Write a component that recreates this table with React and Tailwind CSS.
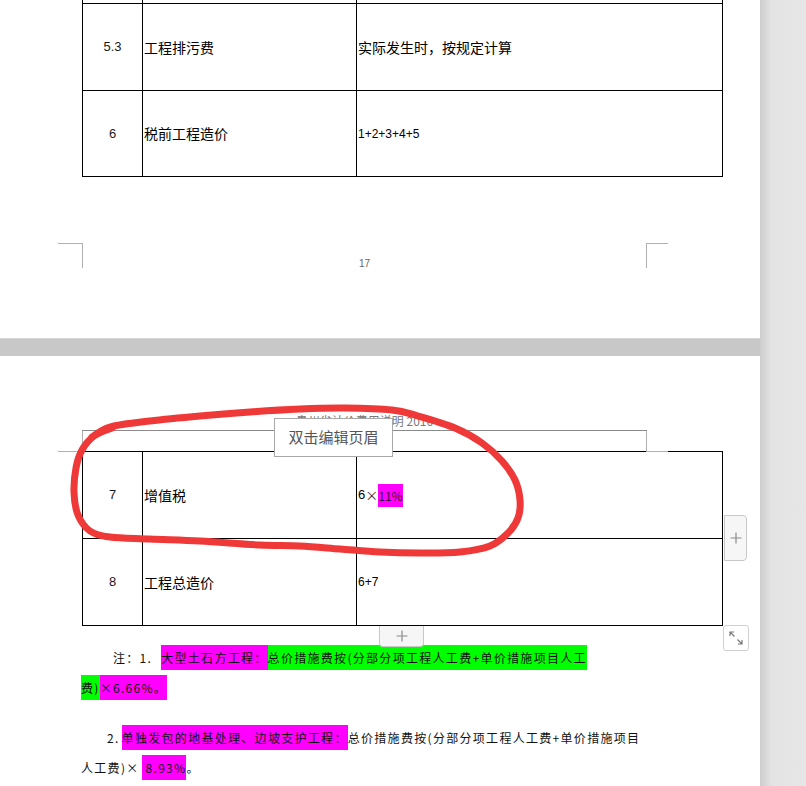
import React from "react";

const pts = [
  [92, 437], [110, 427], [150, 421], [200, 416], [250, 412], [300, 409], [345, 408],
  [392, 410], [418, 416], [455, 428], [482, 443], [502, 461], [515, 480], [520, 500],
  [518, 518], [508, 533], [490, 546], [460, 552], [420, 553], [380, 552], [340, 549],
  [300, 546], [260, 545], [200, 541], [150, 539], [110, 537], [90, 531], [78, 515],
  [74, 492], [76, 468], [82, 450], [94, 436], [112, 428],
];

function smooth(p) {
  let d = `M${p[0][0]},${p[0][1]}`;
  for (let i = 0; i < p.length - 1; i++) {
    const p0 = p[i - 1] || p[i];
    const p1 = p[i];
    const p2 = p[i + 1];
    const p3 = p[i + 2] || p2;
    const c1 = [p1[0] + (p2[0] - p0[0]) / 6, p1[1] + (p2[1] - p0[1]) / 6];
    const c2 = [p2[0] - (p3[0] - p1[0]) / 6, p2[1] - (p3[1] - p1[1]) / 6];
    d += ` C${c1[0].toFixed(1)},${c1[1].toFixed(1)} ${c2[0].toFixed(1)},${c2[1].toFixed(1)} ${p2[0]},${p2[1]}`;
  }
  return d;
}

const cjk = "font-['Noto_Sans_CJK_SC',sans-serif]";
const num = "font-['Liberation_Sans','Noto_Sans_CJK_SC',sans-serif]";

function Row({ h, n, name, formula, top = true }) {
  return (
    <div className={`grid grid-cols-[59px_214px_1fr] ${h} ${top ? "border-t" : ""} border-black`}>
      <div className={`flex items-center justify-center ${num} text-[13px] text-[#1a1a1a]`}>{n}</div>
      <div className={`flex items-center border-l border-black pl-px ${cjk} text-[14px] text-black`}>{name}</div>
      <div className="flex items-center border-l border-black pl-px">{formula}</div>
    </div>
  );
}

export default function App() {
  return (
    <div className="relative flex h-[786px] w-[806px] overflow-hidden bg-[#e6e6e6]">
      <div className="flex w-[760px] flex-col">
        {/* Page 1 */}
        <div className="h-[338px] bg-white">
          <div className="ml-[82px] w-[641px] border-x border-b border-black">
            <div className="grid h-[3px] grid-cols-[59px_214px_1fr]">
              <div />
              <div className="border-l border-black" />
              <div className="border-l border-black" />
            </div>
            <Row
              h="h-[87px]"
              n="5.3"
              name="工程排污费"
              formula={<span className={`${cjk} text-[14px] text-black`}>实际发生时，按规定计算</span>}
            />
            <Row
              h="h-[86px]"
              n="6"
              name="税前工程造价"
              formula={<span className={`${num} text-[12px] text-black`}>1+2+3+4+5</span>}
            />
          </div>
          <div className="mt-[66px] flex pl-[58px]">
            <div className="h-[25px] w-[25px] border-r border-t border-[#b0b0b0]" />
            <div className="flex w-[563px] justify-center pt-[15px]">
              <span className={`${num} text-[10px] leading-[12px] text-[#666]`}>17</span>
            </div>
            <div className="h-[25px] w-[22px] border-l border-t border-[#b0b0b0]" />
          </div>
        </div>

        {/* gap between pages */}
        <div className="h-[18px] border-t border-[#d6d6d6] bg-[#c8c8c8]" />

        {/* Page 2 */}
        <div className="relative flex-1 bg-white">
          <div className="ml-[82px] flex h-[75px] w-[565px] items-end justify-center border-b border-[#8a8a8a] pb-px">
            <span className={`${cjk} text-[12px] leading-[16px] text-[#7a7a7a]`}>贵州省计价费用说明 2016</span>
          </div>
          <div className="flex pl-[58px]">
            <div className="h-[21px] w-[25px] border-b border-r border-[#b0b0b0]" />
            <div className="w-[563px]" />
            <div className="h-[21px] w-[22px] border-b border-l border-[#b0b0b0]" />
          </div>
          <div className="-mt-px ml-[82px] w-[641px] border-x border-b border-black">
            <Row
              h="h-[87px]"
              n="7"
              name="增值税"
              formula={
                <span className={`${cjk} flex items-center text-[13px] text-black`}>
                  <span className={num}>6</span>
                  <span className="text-[#333]">×</span>
                  <span className="bg-[#ff00ff] py-[3px] text-[12px] leading-[17px] text-[#3a003a]">11%</span>
                </span>
              }
            />
            <Row
              h="h-[87px]"
              n="8"
              name="工程总造价"
              formula={<span className={`${num} text-[12px] text-black`}>6+7</span>}
            />
          </div>

          {/* notes */}
          <div className={`ml-[81px] mt-[17px] ${cjk} text-[12px] leading-[30px] tracking-[1.3px] text-[#111]`}>
            <div className="whitespace-nowrap pl-[32px]">
              注：1.<span className="inline-block w-[9px]" />
              <span className="bg-[#ff00ff] py-[4px]">大型土石方工程：</span>
              <span className="bg-[#00ff00] py-[4px]">总价措施费按(分部分项工程人工费+单价措施项目人工</span>
            </div>
            <div className="whitespace-nowrap">
              <span className="bg-[#00ff00] py-[4px]">费)</span>
              <span className="bg-[#ff00ff] py-[4px]">×6.66%。</span>
            </div>
            <div className="mt-[20px] whitespace-nowrap pl-[26px]">
              2.<span className="inline-block w-[2px]" />
              <span className="bg-[#ff00ff] py-[4px]">单独发包的地基处理、边坡支护工程：</span>
              总价措施费按(分部分项工程人工费+单价措施项目
            </div>
            <div className="whitespace-nowrap">
              人工费)×<span className="inline-block w-[2px]" />
              <span className="bg-[#ff00ff] py-[4px]"> 8.93%</span>。
            </div>
          </div>

          {/* header tooltip */}
          <div
            className={`absolute left-[274px] top-[62px] flex h-[39px] w-[119px] items-center justify-center border border-[#a8a8a8] bg-white ${cjk} text-[15px] text-[#555]`}
          >
            双击编辑页眉
          </div>

          {/* right add-column button */}
          <div className="absolute left-[724px] top-[159px] flex h-[46px] w-[23px] items-center justify-center rounded-r-[4px] border border-[#c8c8c8] bg-[#f6f6f6]">
            <svg width="12" height="12" viewBox="0 0 12 12">
              <path d="M6 0.5V11.5M0.5 6H11.5" stroke="#8a8a8a" strokeWidth="1.2" />
            </svg>
          </div>

          {/* bottom add-row button */}
          <div className="absolute left-[379px] top-[270px] flex h-[21px] w-[45px] items-center justify-center rounded-b-[4px] border-x border-b border-[#c8c8c8] bg-[#f6f6f6]">
            <svg width="12" height="12" viewBox="0 0 12 12">
              <path d="M6 0.5V11.5M0.5 6H11.5" stroke="#8a8a8a" strokeWidth="1.2" />
            </svg>
          </div>

          {/* resize handle */}
          <div className="absolute left-[723px] top-[269px] flex h-[26px] w-[26px] items-center justify-center rounded-[3px] border border-[#d0d0d0] bg-white">
            <svg width="16" height="16" viewBox="0 0 16 16" fill="none" stroke="#7a7a7a" strokeWidth="1.2">
              <path d="M2 6V2H6M2 2L6.5 6.5" />
              <path d="M14 10V14H10M14 14L9.5 9.5" />
            </svg>
          </div>
        </div>
      </div>

      {/* right side gutter */}
      <div className="flex-1 bg-linear-to-r from-[#cdcdcd] via-[#e3e3e3] via-25% to-[#e6e6e6]" />

      {/* red hand-drawn annotation */}
      <svg
        className="pointer-events-none absolute left-0 top-0"
        width="806"
        height="786"
        viewBox="0 0 806 786"
        fill="none"
      >
        <path d={smooth(pts)} stroke="#ef3838" strokeWidth="7" strokeLinecap="round" strokeLinejoin="round" />
      </svg>
    </div>
  );
}
